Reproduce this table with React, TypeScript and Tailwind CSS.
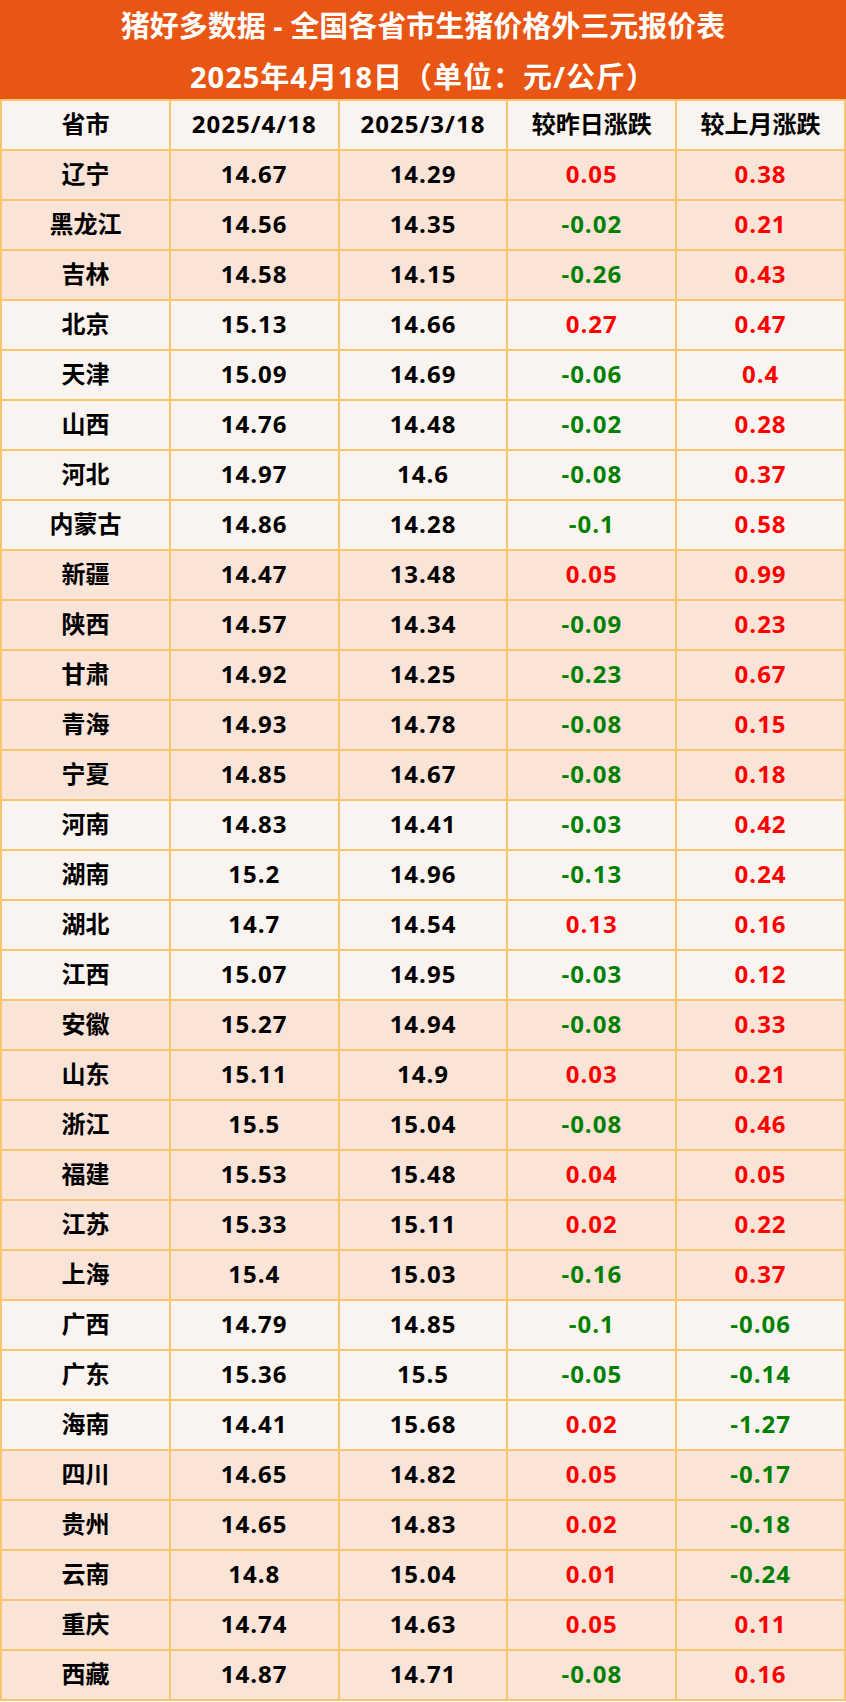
import React from 'react';

type Row = {
  name: string;
  today: string;
  lastMonth: string;
  dayDiff: string;
  monthDiff: string;
  pink: boolean;
};

const raw: [string, string, string, string, string, boolean][] = [
  ['辽宁', '14.67', '14.29', '0.05', '0.38', true],
  ['黑龙江', '14.56', '14.35', '-0.02', '0.21', true],
  ['吉林', '14.58', '14.15', '-0.26', '0.43', true],
  ['北京', '15.13', '14.66', '0.27', '0.47', false],
  ['天津', '15.09', '14.69', '-0.06', '0.4', false],
  ['山西', '14.76', '14.48', '-0.02', '0.28', false],
  ['河北', '14.97', '14.6', '-0.08', '0.37', false],
  ['内蒙古', '14.86', '14.28', '-0.1', '0.58', false],
  ['新疆', '14.47', '13.48', '0.05', '0.99', true],
  ['陕西', '14.57', '14.34', '-0.09', '0.23', true],
  ['甘肃', '14.92', '14.25', '-0.23', '0.67', true],
  ['青海', '14.93', '14.78', '-0.08', '0.15', true],
  ['宁夏', '14.85', '14.67', '-0.08', '0.18', true],
  ['河南', '14.83', '14.41', '-0.03', '0.42', false],
  ['湖南', '15.2', '14.96', '-0.13', '0.24', false],
  ['湖北', '14.7', '14.54', '0.13', '0.16', false],
  ['江西', '15.07', '14.95', '-0.03', '0.12', false],
  ['安徽', '15.27', '14.94', '-0.08', '0.33', true],
  ['山东', '15.11', '14.9', '0.03', '0.21', true],
  ['浙江', '15.5', '15.04', '-0.08', '0.46', true],
  ['福建', '15.53', '15.48', '0.04', '0.05', true],
  ['江苏', '15.33', '15.11', '0.02', '0.22', true],
  ['上海', '15.4', '15.03', '-0.16', '0.37', true],
  ['广西', '14.79', '14.85', '-0.1', '-0.06', false],
  ['广东', '15.36', '15.5', '-0.05', '-0.14', false],
  ['海南', '14.41', '15.68', '0.02', '-1.27', false],
  ['四川', '14.65', '14.82', '0.05', '-0.17', true],
  ['贵州', '14.65', '14.83', '0.02', '-0.18', true],
  ['云南', '14.8', '15.04', '0.01', '-0.24', true],
  ['重庆', '14.74', '14.63', '0.05', '0.11', true],
  ['西藏', '14.87', '14.71', '-0.08', '0.16', true],
];

const rows: Row[] = raw.map(([name, today, lastMonth, dayDiff, monthDiff, pink]) => ({
  name,
  today,
  lastMonth,
  dayDiff,
  monthDiff,
  pink,
}));

const headers = ['省市', '2025/4/18', '2025/3/18', '较昨日涨跌', '较上月涨跌'];

function Cell({
  children,
  pink,
  color = 'text-black',
  num = false,
}: {
  children: React.ReactNode;
  pink: boolean;
  color?: string;
  num?: boolean;
}) {
  return (
    <div
      className={`h-[48px] flex items-center justify-center pb-[2px] ${pink ? 'bg-[#fae3d7]' : 'bg-[#faf4f0]'} ${color} ${num ? 'tracking-[1px]' : ''}`}
    >
      {children}
    </div>
  );
}

function diffColor(v: string) {
  return v.startsWith('-') ? 'text-[#008000]' : 'text-[#ff0000]';
}

export default function App() {
  return (
    <div
      className="w-[846px] bg-white"
      style={{ fontFamily: '"Open Sans", "Noto Sans CJK SC", sans-serif' }}
    >
      {/* 标题 */}
      <div className="h-[99px] overflow-hidden bg-[#e95513] text-white font-bold text-[29px] leading-[51px] text-center">
        <div>猪好多数据 - 全国各省市生猪价格外三元报价表</div>
        <div className="tracking-[1px]">2025年4月18日（单位：元/公斤）</div>
      </div>

      {/* 表格 */}
      <div className="bg-[#f9c66e] p-[2px]">
        <div className="grid grid-cols-5 gap-[2px] font-bold text-[24px]">
          {headers.map((h, i) => (
            <Cell key={h} pink={false} num={i === 1 || i === 2}>
              {h}
            </Cell>
          ))}
          {rows.map((r) => (
            <React.Fragment key={r.name}>
              <Cell pink={r.pink}>{r.name}</Cell>
              <Cell pink={r.pink} num>
                {r.today}
              </Cell>
              <Cell pink={r.pink} num>
                {r.lastMonth}
              </Cell>
              <Cell pink={r.pink} color={diffColor(r.dayDiff)} num>
                {r.dayDiff}
              </Cell>
              <Cell pink={r.pink} color={diffColor(r.monthDiff)} num>
                {r.monthDiff}
              </Cell>
            </React.Fragment>
          ))}
        </div>
      </div>
    </div>
  );
}
